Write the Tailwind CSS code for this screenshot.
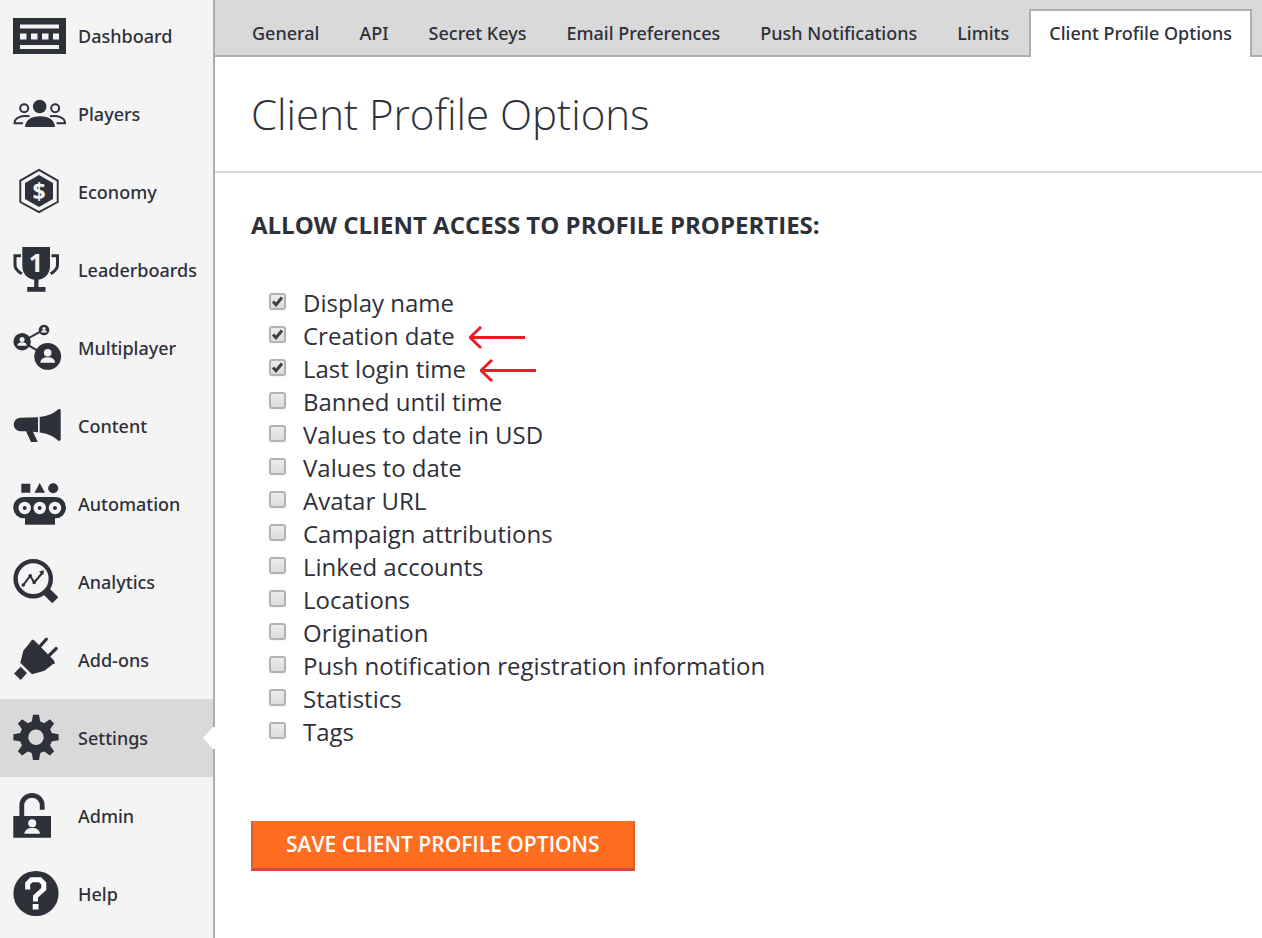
<!DOCTYPE html>
<html lang="en">
<head>
<meta charset="utf-8">
<meta name="viewport" content="width=device-width, initial-scale=1">
<title>Client Profile Options</title>
<script src="https://cdn.jsdelivr.net/npm/@tailwindcss/browser@4"></script>
</head>
<body class="flex min-h-screen overflow-x-hidden bg-white font-['Open_Sans','Noto_Sans',sans-serif] text-[#2e313a]">

<aside class="w-[215px] shrink-0 border-r-2 border-[#aeaeae] bg-[#f4f4f4]">
  <nav aria-label="Main" class="-mt-[3px] font-['Noto_Sans',sans-serif] text-lg font-medium">
    <a href="#" class="flex h-[78px] items-center gap-3">
      <svg class="h-[78px] w-[66px] shrink-0" viewBox="0 0 66 78" fill="#2e313a" aria-hidden="true"><path fill-rule="evenodd" d="M13 21h53v36H13zM20 27.500v4h39v-4zM20 36.500v6h6.500v-6zM31 36.500v6h6.500v-6zM42 36.500v6h6.500v-6zM53 36.500v6h6v-6zM20 48v4h39v-4z"/></svg>
      Dashboard</a>
    <a href="#" class="flex h-[78px] items-center gap-3">
      <svg class="h-[78px] w-[66px] shrink-0" viewBox="0 0 66 78" fill="#2e313a" aria-hidden="true"><circle cx="39.700" cy="31.500" r="6.800"/><path d="M25 52c.5-7 6-10.800 15-10.800S54.500 45 55 52z"/><g fill="none" stroke="#2e313a" stroke-width="2"><circle cx="24.200" cy="33.300" r="4"/><circle cx="55.200" cy="33.300" r="4"/><path d="M29.500 41.200C20.500 40 14.500 43 14.500 48.200h8.500M50 41.200c9-1.200 15 1.800 15 7h-8.500"/></g></svg>
      Players</a>
    <a href="#" class="flex h-[78px] items-center gap-3">
      <svg class="h-[78px] w-[66px] shrink-0" viewBox="0 0 66 78" fill="#2e313a" aria-hidden="true"><path d="M39 16.900 57.700 27.600v21.400L39 59.100 20.300 49V27.600z" fill="none" stroke="#2e313a" stroke-width="1.900"/><path d="M39 22l14 8v16l-14 8-14-8V30z"/><text x="39" y="46.500" text-anchor="middle" font-family="Noto Sans" font-weight="700" font-size="23" fill="#f4f4f4">$</text></svg>
      Economy</a>
    <a href="#" class="flex h-[78px] items-center gap-3">
      <svg class="h-[78px] w-[66px] shrink-0" viewBox="0 0 66 78" fill="#2e313a" aria-hidden="true"><path d="M22.300 16H50v19c0 8-5 12.500-11.500 13.800V56h7v4.800H27.200V56h7v-7.200C27.500 47.500 22.300 43 22.300 35z"/><path d="M21 24.700h-6V34c0 4 3 6.500 6.800 8.800M51.500 24.700h6V34c0 4-3 6.500-6.800 8.800" fill="none" stroke="#2e313a" stroke-width="3"/><text x="36" y="41" text-anchor="middle" font-family="Noto Sans" font-weight="700" font-size="25" fill="#f4f4f4">1</text></svg>
      Leaderboards</a>
    <a href="#" class="flex h-[78px] items-center gap-3">
      <svg class="h-[78px] w-[66px] shrink-0" viewBox="0 0 66 78" fill="#2e313a" aria-hidden="true"><path d="M47.700 47.300 22 32.700l22-12" fill="none" stroke="#2e313a" stroke-width="2"/><circle cx="22.100" cy="32.700" r="8.700"/><circle cx="44" cy="21" r="5.300"/><circle cx="47.700" cy="47.400" r="13.400"/><g fill="#f4f4f4"><circle cx="47.700" cy="43.800" r="3.800"/><path d="M40.300 53.800c.5-4 3.300-5.500 7.400-5.500s6.900 1.500 7.400 5.500z"/><circle cx="22.100" cy="30.500" r="2.500"/><path d="M17.300 36.800c.3-2.600 2-3.600 4.800-3.600s4.500 1 4.800 3.600z"/><circle cx="44" cy="19.500" r="1.600"/><path d="M41 23.500c.2-1.700 1.200-2.300 3-2.300s2.800.6 3 2.300z"/></g></svg>
      Multiplayer</a>
    <a href="#" class="flex h-[78px] items-center gap-3">
      <svg class="h-[78px] w-[66px] shrink-0" viewBox="0 0 66 78" fill="#2e313a" aria-hidden="true"><path d="M38 30.300V45.200l-5-.5L37.700 55H31l-5-10.700h-5.500a6.800 6.800 0 0 1 0-13.600zM39.700 30c7.500-1 14-3.500 18-7.300.8-1 3-.8 3 .8v29c0 1.500-2.200 1.700-3 .8-4-4.200-10.500-6.800-18-7.800z"/></svg>
      Content</a>
    <a href="#" class="flex h-[78px] items-center gap-3">
      <svg class="h-[78px] w-[66px] shrink-0" viewBox="0 0 66 78" fill="#2e313a" aria-hidden="true"><path d="M21.300 18.700h9v9h-9zM39.700 18l5.300 9.700H34.500z"/><circle cx="53.200" cy="23.300" r="5"/><rect x="13.300" y="32" width="52.700" height="21.300" rx="10.600"/><path d="M25 50h30v9.700H25z"/><g fill="#f4f4f4"><circle cx="24.700" cy="43" r="6.200"/><circle cx="39.700" cy="43" r="6.200"/><circle cx="55" cy="43" r="6.200"/></g><circle cx="24.700" cy="43" r="2"/><circle cx="39.700" cy="43" r="2"/><circle cx="55" cy="43" r="2"/></svg>
      Automation</a>
    <a href="#" class="flex h-[78px] items-center gap-3">
      <svg class="h-[78px] w-[66px] shrink-0" viewBox="0 0 66 78" fill="#2e313a" aria-hidden="true"><g fill="none" stroke="#2e313a"><circle cx="33.200" cy="35.700" r="17.600" stroke-width="4.400"/><path d="M45.500 47.500l9.800 9.800" stroke-width="8.500"/><path d="M23.300 42 30.200 32.800l4 6.700 8-9.500" stroke-width="2"/></g><circle cx="23.300" cy="42" r="1.800"/><circle cx="30.200" cy="32.800" r="1.800"/><circle cx="34.200" cy="39.500" r="1.800"/><path d="M44 27.300l-.8 5-4.200-3.800z"/></svg>
      Analytics</a>
    <a href="#" class="flex h-[78px] items-center gap-3">
      <svg class="h-[78px] w-[66px] shrink-0" viewBox="0 0 66 78" fill="#2e313a" aria-hidden="true"><path d="M20.700 45.700 27 52l-6.300 7-6.700-6.500zM32 18.500l2.500 1L54 39.500l1 3-2.300.8-8.200 6.500-12.500 3.500L20.300 41.700l3-12L30 21.500z"/><path d="M38 27.500l8.300-9.300M47.500 36l8.700-8.500" stroke="#2e313a" stroke-width="3.200" stroke-linecap="round"/></svg>
      Add-ons</a>
    <a href="#" aria-current="page" class="relative flex h-[78px] items-center gap-3 bg-[#d9d9d9]">
      <svg class="h-[78px] w-[66px] shrink-0" viewBox="0 0 66 78" fill="#2e313a" aria-hidden="true"><circle cx="36" cy="38.300" r="12" fill="none" stroke="#2e313a" stroke-width="8.500"/><path id="tooth" d="M31.500 24 33 15.700h6l1.500 8.300zM31.500 52.600 33 60.900h6l1.500-8.300z"/><use href="#tooth" transform="rotate(45 36 38.300)"/><use href="#tooth" transform="rotate(90 36 38.300)"/><use href="#tooth" transform="rotate(135 36 38.300)"/></svg>
      Settings
      <svg class="absolute top-7 -right-0.5 h-[22px] w-3" viewBox="0 0 12 22" fill="#fff" aria-hidden="true"><path d="M10 0h2v22h-2L0 11z"/></svg></a>
    <a href="#" class="flex h-[78px] items-center gap-3">
      <svg class="h-[78px] w-[66px] shrink-0" viewBox="0 0 66 78" fill="#2e313a" aria-hidden="true"><path d="M13.300 39H51v21.700H13.300z"/><path d="M21.800 40V28.500a10.200 10.200 0 0 1 20.400 0v4.300" fill="none" stroke="#2e313a" stroke-width="4.800"/><g fill="#f4f4f4"><circle cx="32.200" cy="46.300" r="4"/><path d="M24.300 56.800c.5-4 3.500-5.800 7.900-5.800s7.300 1.800 7.800 5.800z"/></g></svg>
      Admin</a>
    <a href="#" class="flex h-[78px] items-center gap-3">
      <svg class="h-[78px] w-[66px] shrink-0" viewBox="0 0 66 78" fill="#2e313a" aria-hidden="true"><circle cx="36" cy="38.500" r="22.600"/><path d="M27.700 34.500V28.500l3.800-3.800h8.500l3.800 3.800v5.500L35.500 41.500V46.500" fill="none" stroke="#fff" stroke-width="5"/><path d="M32.700 49h5.800v5.500h-5.800z" fill="#fff"/></svg>
      Help</a>
  </nav>
</aside>

<main class="min-w-0 flex-1">
  <nav aria-label="Settings" class="flex border-b-2 border-[#aeaeae] bg-[#d9d9d9] pt-[9px] pl-[17px] font-['Noto_Sans',sans-serif] text-lg leading-7 font-medium whitespace-nowrap">
    <a href="#" class="-mb-0.5 px-5 pt-2.5 pb-2.5">General</a>
    <a href="#" class="-mb-0.5 px-5 pt-2.5 pb-2.5">API</a>
    <a href="#" class="-mb-0.5 px-5 pt-2.5 pb-2.5">Secret Keys</a>
    <a href="#" class="-mb-0.5 px-5 pt-2.5 pb-2.5">Email Preferences</a>
    <a href="#" class="-mb-0.5 px-5 pt-2.5 pb-2.5">Push Notifications</a>
    <a href="#" class="-mb-0.5 px-5 pt-2.5 pb-2.5">Limits</a>
    <a href="#" aria-current="page" class="-mb-0.5 rounded-b-xs border-x-2 border-t-2 border-[#aeaeae] bg-white px-[18px] pt-2 pb-2.5">Client Profile Options</a>
  </nav>

  <header class="border-b-2 border-[#d9d9d9] px-9 pt-7 pb-7">
    <h1 class="text-[42px] leading-[58px] font-light">Client Profile Options</h1>
  </header>

  <form class="px-9 pt-9">
    <fieldset>
      <legend class="text-2xl leading-8 font-bold">ALLOW CLIENT ACCESS TO PROFILE PROPERTIES:</legend>
      <ul class="mt-[45px] pl-[18px] text-2xl leading-[33px]">
        <li class="flex items-center"><label class="flex gap-[17px]"><span class="mt-[7px] grid size-[17px]"><input type="checkbox" checked class="peer col-start-1 row-start-1 size-[17px] appearance-none rounded-[3px] border-2 border-[#b3b3b3] bg-linear-to-b from-[#ececec] to-[#dcdcdc] shadow-xs"><svg class="pointer-events-none col-start-1 row-start-1 hidden size-[17px] peer-checked:block" viewBox="0 0 17 17" aria-hidden="true"><path d="M4 8.500l3 3.300 6-7.300" fill="none" stroke="#404040" stroke-width="3"/></svg></span>Display name</label></li>
        <li class="flex items-center gap-3.5"><label class="flex gap-[17px]"><span class="mt-[7px] grid size-[17px]"><input type="checkbox" checked class="peer col-start-1 row-start-1 size-[17px] appearance-none rounded-[3px] border-2 border-[#b3b3b3] bg-linear-to-b from-[#ececec] to-[#dcdcdc] shadow-xs"><svg class="pointer-events-none col-start-1 row-start-1 hidden size-[17px] peer-checked:block" viewBox="0 0 17 17" aria-hidden="true"><path d="M4 8.500l3 3.300 6-7.300" fill="none" stroke="#404040" stroke-width="3"/></svg></span>Creation date</label><svg class="mt-1 h-6 w-14" viewBox="0 0 56 24" fill="none" stroke="#ed1c24" stroke-width="3" aria-hidden="true"><path d="M1 11.500h55M12 1 1 11.500 12 22"/></svg></li>
        <li class="flex items-center gap-3.5"><label class="flex gap-[17px]"><span class="mt-[7px] grid size-[17px]"><input type="checkbox" checked class="peer col-start-1 row-start-1 size-[17px] appearance-none rounded-[3px] border-2 border-[#b3b3b3] bg-linear-to-b from-[#ececec] to-[#dcdcdc] shadow-xs"><svg class="pointer-events-none col-start-1 row-start-1 hidden size-[17px] peer-checked:block" viewBox="0 0 17 17" aria-hidden="true"><path d="M4 8.500l3 3.300 6-7.300" fill="none" stroke="#404040" stroke-width="3"/></svg></span>Last login time</label><svg class="mt-1 h-6 w-14" viewBox="0 0 56 24" fill="none" stroke="#ed1c24" stroke-width="3" aria-hidden="true"><path d="M1 11.500h55M12 1 1 11.500 12 22"/></svg></li>
        <li><label class="flex gap-[17px]"><input type="checkbox" class="mt-[7px] size-[17px] appearance-none rounded-[3px] border-2 border-[#b3b3b3] bg-linear-to-b from-[#ececec] to-[#dcdcdc] shadow-xs">Banned until time</label></li>
        <li><label class="flex gap-[17px]"><input type="checkbox" class="mt-[7px] size-[17px] appearance-none rounded-[3px] border-2 border-[#b3b3b3] bg-linear-to-b from-[#ececec] to-[#dcdcdc] shadow-xs">Values to date in USD</label></li>
        <li><label class="flex gap-[17px]"><input type="checkbox" class="mt-[7px] size-[17px] appearance-none rounded-[3px] border-2 border-[#b3b3b3] bg-linear-to-b from-[#ececec] to-[#dcdcdc] shadow-xs">Values to date</label></li>
        <li><label class="flex gap-[17px]"><input type="checkbox" class="mt-[7px] size-[17px] appearance-none rounded-[3px] border-2 border-[#b3b3b3] bg-linear-to-b from-[#ececec] to-[#dcdcdc] shadow-xs">Avatar URL</label></li>
        <li><label class="flex gap-[17px]"><input type="checkbox" class="mt-[7px] size-[17px] appearance-none rounded-[3px] border-2 border-[#b3b3b3] bg-linear-to-b from-[#ececec] to-[#dcdcdc] shadow-xs">Campaign attributions</label></li>
        <li><label class="flex gap-[17px]"><input type="checkbox" class="mt-[7px] size-[17px] appearance-none rounded-[3px] border-2 border-[#b3b3b3] bg-linear-to-b from-[#ececec] to-[#dcdcdc] shadow-xs">Linked accounts</label></li>
        <li><label class="flex gap-[17px]"><input type="checkbox" class="mt-[7px] size-[17px] appearance-none rounded-[3px] border-2 border-[#b3b3b3] bg-linear-to-b from-[#ececec] to-[#dcdcdc] shadow-xs">Locations</label></li>
        <li><label class="flex gap-[17px]"><input type="checkbox" class="mt-[7px] size-[17px] appearance-none rounded-[3px] border-2 border-[#b3b3b3] bg-linear-to-b from-[#ececec] to-[#dcdcdc] shadow-xs">Origination</label></li>
        <li><label class="flex gap-[17px]"><input type="checkbox" class="mt-[7px] size-[17px] appearance-none rounded-[3px] border-2 border-[#b3b3b3] bg-linear-to-b from-[#ececec] to-[#dcdcdc] shadow-xs">Push notification registration information</label></li>
        <li><label class="flex gap-[17px]"><input type="checkbox" class="mt-[7px] size-[17px] appearance-none rounded-[3px] border-2 border-[#b3b3b3] bg-linear-to-b from-[#ececec] to-[#dcdcdc] shadow-xs">Statistics</label></li>
        <li><label class="flex gap-[17px]"><input type="checkbox" class="mt-[7px] size-[17px] appearance-none rounded-[3px] border-2 border-[#b3b3b3] bg-linear-to-b from-[#ececec] to-[#dcdcdc] shadow-xs">Tags</label></li>
      </ul>
    </fieldset>
    <button type="button" class="mt-[73px] border-x-2 border-b-3 border-x-[#d4622a] border-b-[#e0443a] bg-[#ff6e20] px-[33px] pt-[7px] pb-2 text-[21px] leading-8 font-semibold text-white">SAVE CLIENT PROFILE OPTIONS</button>
  </form>
</main>
</body>
</html>
